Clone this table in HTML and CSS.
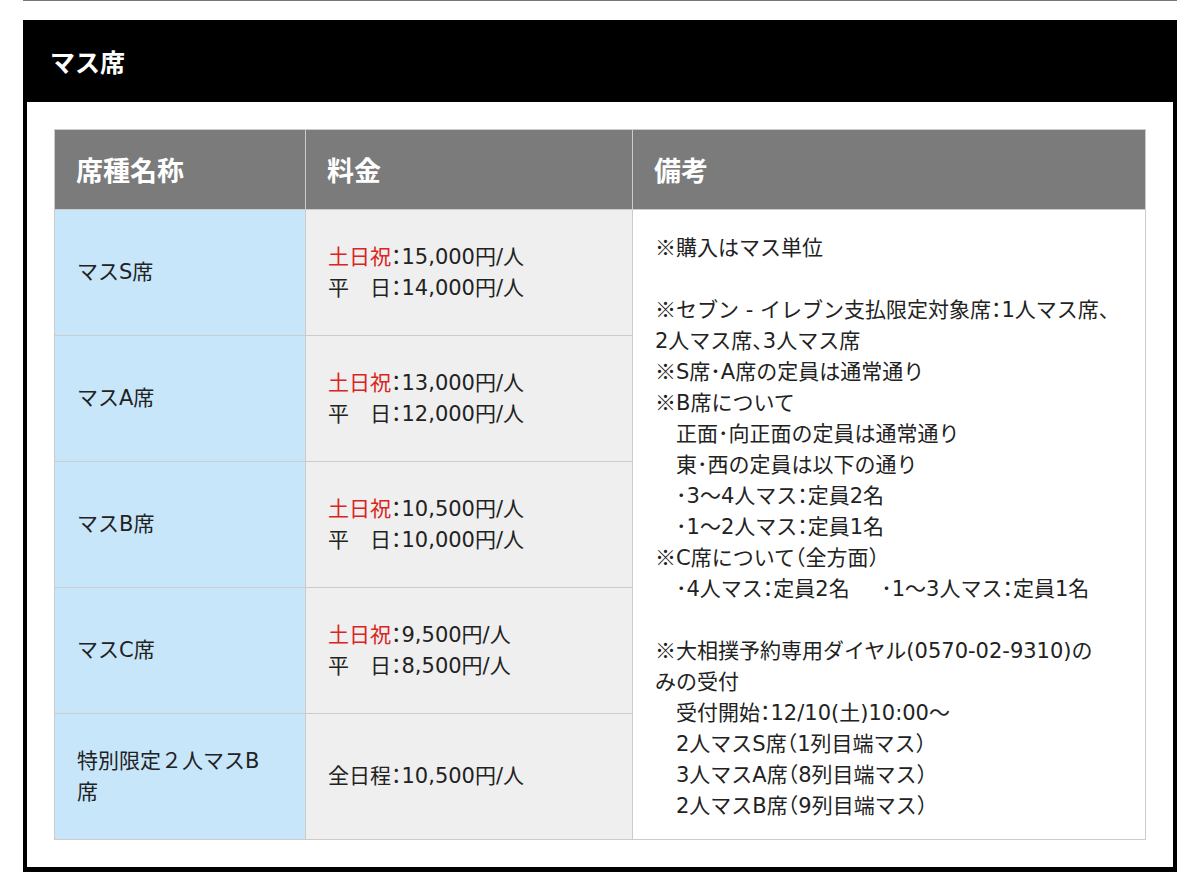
FILE: index.html
```html
<!DOCTYPE html>
<html lang="ja">
<head>
<meta charset="utf-8">
<title>マス席</title>
<link rel="stylesheet" href="styles.css">
</head>
<body>
<div class="topline"></div>
<section class="seat">
  <h2 class="seat-title">マス席</h2>
  <div class="seat-body">
    <table class="price">
      <colgroup><col class="c1"><col class="c2"><col class="c3"></colgroup>
      <thead>
        <tr><th>席種名称</th><th>料金</th><th>備考</th></tr>
      </thead>
      <tbody>
        <tr>
          <td class="name">マスS席</td>
          <td class="fee"><span class="red">土日祝</span>：15,000円/人<br>平　日：14,000円/人</td>
          <td class="note" rowspan="5"><span class="jp">※</span>購入はマス単位<br><br><span class="jp">※</span>セブン - イレブン支払限定対象席：1人マス席、<br>2人マス席、3人マス席<br><span class="jp">※</span>S席･A席の定員は通常通り<br><span class="jp">※</span>B席について<br>　正面･向正面の定員は通常通り<br>　東･西の定員は以下の通り<br>　･3<span class="jp">〜</span>4人マス：定員2名<br>　･1<span class="jp">〜</span>2人マス：定員1名<br><span class="jp">※</span>C席について（全方面）<br>　･4人マス：定員2名　&ensp;･1<span class="jp">〜</span>3人マス：定員1名<br><br><span class="jp">※</span>大相撲予約専用ダイヤル(0570-02-9310)の<br>みの受付<br>　受付開始：12/10(土)10:00<span class="jp">〜</span><br>　2人マスS席（1列目端マス）<br>　3人マスA席（8列目端マス）<br>　2人マスB席（9列目端マス）</td>
        </tr>
        <tr>
          <td class="name">マスA席</td>
          <td class="fee"><span class="red">土日祝</span>：13,000円/人<br>平　日：12,000円/人</td>
        </tr>
        <tr>
          <td class="name">マスB席</td>
          <td class="fee"><span class="red">土日祝</span>：10,500円/人<br>平　日：10,000円/人</td>
        </tr>
        <tr>
          <td class="name">マスC席</td>
          <td class="fee"><span class="red">土日祝</span>：9,500円/人<br>平　日：8,500円/人</td>
        </tr>
        <tr>
          <td class="name">特別限定２人マスB<br>席</td>
          <td class="fee">全日程：10,500円/人</td>
        </tr>
      </tbody>
    </table>
  </div>
</section>
</body>
</html>
```

FILE: styles.css
```css
html, body {
  margin: 0;
  padding: 0;
  background: #fff;
}
body {
  font-family: "Noto Sans CJK JP", "Noto Sans", sans-serif;
  color: #222;
}
.topline {
  height: 1px;
  background: #777;
  margin: 0 23px;
}
.seat {
  margin: 19px 23px 0;
}
.seat-title {
  margin: 0;
  height: 82px;
  background: #000;
  color: #fff;
  font-size: 25px;
  font-weight: 700;
  line-height: 82px;
  padding-left: 27px;
}
.seat-body {
  border: 4px solid #000;
  border-top: 0;
  border-bottom-width: 5px;
  padding: 27px 28px 27px 27px;
}
.price {
  width: 1091px;
  border-collapse: collapse;
  table-layout: fixed;
}
.c1 { width: 251px; }
.c2 { width: 327px; }
.c3 { width: 513px; }
.price th,
.price td {
  border: 1px solid #cccccc;
  padding: 0 22px;
  text-align: left;
}
.price th {
  height: 79px;
  background: #7b7b7b;
  color: #fff;
  font-size: 27px;
  font-weight: 700;
  vertical-align: middle;
  padding-left: 21px;
}
.price td {
  font-family: "DejaVu Sans", "Noto Sans CJK JP", sans-serif;
  font-feature-settings: "halt";
  font-size: 21px;
  line-height: 31px;
  height: 125px;
  vertical-align: middle;
}
.price td .jp {
  font-family: "Noto Sans CJK JP", sans-serif;
  line-height: 1;
}
.price td.name {
  background: #c7e6fa;
}
.price td.fee {
  background: #efefef;
}
.price td.note {
  background: #fff;
  vertical-align: top;
  padding-top: 23px;
}
.red {
  color: #d9251d;
}
```
